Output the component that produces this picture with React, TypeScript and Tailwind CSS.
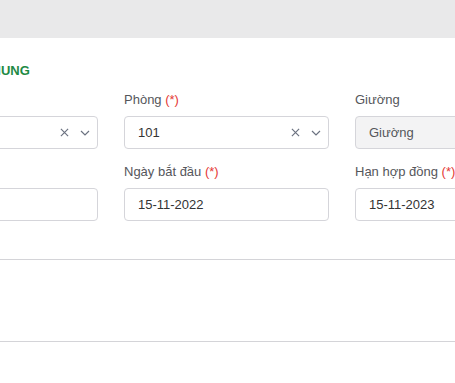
import React from "react";

const font = { fontFamily: '"Liberation Sans", Arial, sans-serif' };

function Req() {
  return <span className="text-[#e53935]"> (*)</span>;
}

function Clear() {
  return (
    <svg width="9" height="9" viewBox="0 0 10 10" className="text-[#6b7280]">
      <path d="M1 1 L9 9 M9 1 L1 9" stroke="currentColor" strokeWidth="1.3" />
    </svg>
  );
}

function Chevron() {
  return (
    <svg width="10" height="6" viewBox="0 0 10 6" className="text-[#6b7280]">
      <path d="M1 1 L5 5 L9 1" fill="none" stroke="currentColor" strokeWidth="1.2" />
    </svg>
  );
}

function Field({
  label,
  required,
  value,
  select,
  disabled,
}: {
  label: string;
  required?: boolean;
  value?: string;
  select?: boolean;
  disabled?: boolean;
}) {
  return (
    <div className="flex flex-col">
      <div className="text-[13px] leading-[18px] text-[#55565b] mb-[7px] whitespace-nowrap">
        {label}
        {required && <Req />}
      </div>
      <div
        className={
          "flex items-center h-[33px] rounded-[4px] border border-[#d5d5da] pl-[13px] pr-[7px] text-[13px] " +
          (disabled ? "bg-[#f3f3f4] text-[#55565b]" : "bg-white text-[#333]")
        }
      >
        <span className="flex-1">{value}</span>
        {select && (
          <div className="flex items-center gap-[11px]">
            <Clear />
            <Chevron />
          </div>
        )}
      </div>
    </div>
  );
}

export default function App() {
  return (
    <div className="w-[455px] h-[383px] overflow-hidden bg-white" style={font}>
      <div className="h-[38px] bg-[#e9e9ea]"></div>
      <div className="pt-[25px]">
        <div className="ml-[-93px] text-[13px] leading-[16px] font-bold text-[#1e8a44] whitespace-nowrap">
          THÔNG TIN CHUNG
        </div>
        <div className="ml-[-107px] mt-[12px] grid grid-cols-[205px_205px_205px] gap-x-[26px] gap-y-[14px]">
          <Field label="Tòa nhà" required select />
          <Field label="Phòng" required value="101" select />
          <Field label="Giường" value="Giường" disabled />
          <Field label="Ngày ký" required />
          <Field label="Ngày bắt đầu" required value="15-11-2022" />
          <Field label="Hạn hợp đồng" required value="15-11-2023" />
        </div>
      </div>
      <div className="mt-[38px] border-t border-[#d4d4d8]"></div>
      <div className="mt-[81px] border-t border-[#d4d4d8]"></div>
    </div>
  );
}
